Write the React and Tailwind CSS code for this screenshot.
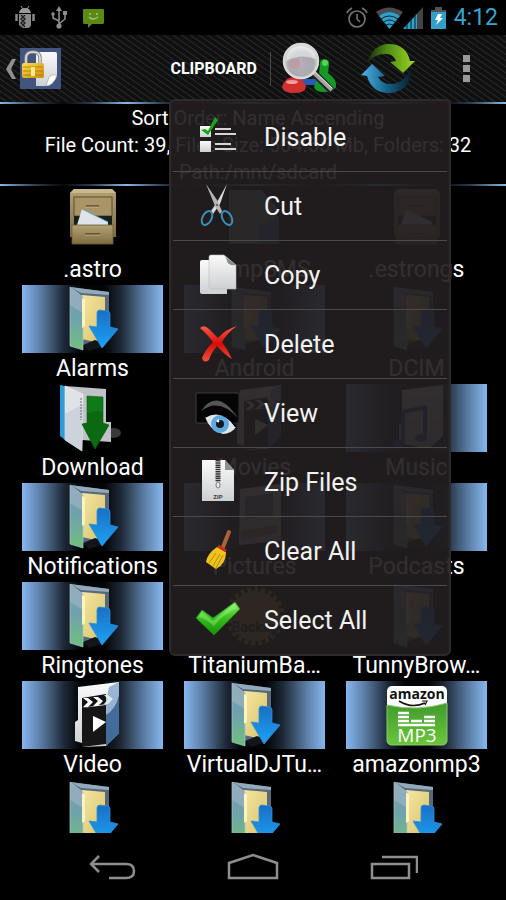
const EDGE_LINE =
  'h-[2px] shrink-0 bg-[repeating-linear-gradient(90deg,#8ab8e6_0%,#2b3d50_7%,#05080c_12.5%,#2b3d50_18%,#8ab8e6_25%)]';

// Gradients shared by all of the icons
function Gradients() {
  return (
    <svg className="absolute size-0" aria-hidden="true">
      <defs>
        <linearGradient id="cover" x1="0" y1="0" x2="0" y2="1">
          <stop offset="0" stopColor="#7d9bb0" />
          <stop offset="0.5" stopColor="#6fa3ab" />
          <stop offset="1" stopColor="#6fc07c" />
        </linearGradient>
        <linearGradient id="paper" x1="0" y1="0" x2="1" y2="1">
          <stop offset="0" stopColor="#f5e6a0" />
          <stop offset="1" stopColor="#d6c26c" />
        </linearGradient>
        <linearGradient id="arrow" x1="0" y1="0" x2="0" y2="1">
          <stop offset="0" stopColor="#1a6fc4" />
          <stop offset="1" stopColor="#1ca2f4" />
        </linearGradient>
        <linearGradient id="white" x1="0" y1="0" x2="0" y2="1">
          <stop offset="0" stopColor="#fafafa" />
          <stop offset="1" stopColor="#cdd0d3" />
        </linearGradient>
        <linearGradient id="wood" x1="0" y1="0" x2="0" y2="1">
          <stop offset="0" stopColor="#b3a175" />
          <stop offset="1" stopColor="#806c41" />
        </linearGradient>
        <linearGradient id="leaf" x1="0" y1="0" x2="1" y2="0">
          <stop offset="0" stopColor="#12260a" />
          <stop offset="0.4" stopColor="#4d8a14" />
          <stop offset="1" stopColor="#9ad423" />
        </linearGradient>
        <linearGradient id="sea" x1="0" y1="0" x2="1" y2="0">
          <stop offset="0" stopColor="#4fb4e8" />
          <stop offset="0.5" stopColor="#16648c" />
          <stop offset="1" stopColor="#0a1c28" />
        </linearGradient>
        <linearGradient id="tick" x1="0" y1="0" x2="0" y2="1">
          <stop offset="0" stopColor="#8df06c" />
          <stop offset="0.5" stopColor="#35bd1c" />
          <stop offset="1" stopColor="#178f08" />
        </linearGradient>
        <linearGradient id="red" x1="0" y1="0" x2="0" y2="1">
          <stop offset="0" stopColor="#ff5a4a" />
          <stop offset="0.5" stopColor="#d80d05" />
          <stop offset="1" stopColor="#f0523f" />
        </linearGradient>
        <linearGradient id="gold" x1="0" y1="0" x2="1" y2="1">
          <stop offset="0" stopColor="#ffe04a" />
          <stop offset="1" stopColor="#c98a08" />
        </linearGradient>
        <linearGradient id="mp3" x1="0" y1="0" x2="0" y2="1">
          <stop offset="0" stopColor="#3f9a2c" />
          <stop offset="1" stopColor="#6cc63c" />
        </linearGradient>
        <radialGradient id="lens" cx="0.5" cy="0.6" r="0.6">
          <stop offset="0" stopColor="#b9aeb9" />
          <stop offset="0.6" stopColor="#a9abaf" />
          <stop offset="1" stopColor="#e4e6e8" />
        </radialGradient>
      </defs>
    </svg>
  );
}

function FileSvg({ children }) {
  return (
    <svg viewBox="-6 0 68 68" className="size-[68px]" aria-hidden="true">
      {children}
    </svg>
  );
}

function FolderIcon() {
  return (
    <FileSvg>
      <path d="M5 2 44 7V40L30 58 18 60Z" fill="#56697a" />
      <path d="M5 2 44 7V10L16 8Z" fill="#93aabd" />
      <path d="M17 10 40 12V50L30 57 17 54Z" fill="url(#paper)" />
      <path d="M18 60 30 55 42 60 24 66Z" fill="#12161a" />
      <path d="M5 2 18 12V65L5 61Z" fill="url(#cover)" stroke="#a9c4cc" strokeWidth="0.7" />
      <path d="M5 2 18 12V28L5 20Z" fill="#a8bccb" opacity="0.5" />
      <path d="M17 13 20 15V41L17 43Z" fill="#fff3bd" />
      <path d="M32 28Q32 25 35 25L42 26Q45 26 45 29V42L53 44 37 63 24 41 32 42Z" fill="url(#arrow)" stroke="#2a91e0" strokeWidth="0.8" />
    </FileSvg>
  );
}

function DownloadIcon() {
  return (
    <FileSvg>
      <ellipse cx="48" cy="49" rx="8" ry="5" fill="#3a3a3a" />
      <path d="M0 2 41 5V38H46V58L17 56Z" fill="#bfc3c7" />
      <path d="M-5 1 0 2V56L-5 52Z" fill="#2d9bd6" />
      <path d="M0 2 18 10 17 67 0 56Z" fill="#dfe3e8" stroke="#f4f4f4" strokeWidth="0.6" />
      <path d="M0 30 18 20 17 67 0 56Z" fill="#cdd3da" />
      <path d="M16 14V36" stroke="#6c7076" strokeWidth="1" strokeDasharray="2 1" />
      <path d="M22 12 38 13V39L44 41 30 65 17 40 22 39Z" fill="#0f7a17" stroke="#0a5c10" strokeWidth="0.6" />
      <path d="M22 30Q30 25 38 28V39L44 41 30 65 17 40 22 39Z" fill="#075e0d" opacity="0.6" />
    </FileSvg>
  );
}

function CabinetIcon() {
  return (
    <FileSvg>
      <path d="M9 3H47L51 7V51H5V7Z" fill="url(#wood)" />
      <path d="M9 3H47L51 7H5Z" fill="#c9b98e" />
      <rect x="9" y="11" width="38" height="19" fill="#a89467" stroke="#5c4c2b" strokeWidth="1" />
      <rect x="9" y="30" width="38" height="9" fill="#15201c" />
      <path d="M17 23 43 36V39H12Z" fill="#dfe4ea" />
      <path d="M17 23 43 36" stroke="#5ea4bf" strokeWidth="1" />
      <rect x="7" y="39" width="41" height="19" fill="url(#wood)" stroke="#6e5c36" strokeWidth="0.8" />
      <path d="M21 20H34M20 48H35" stroke="#54452a" strokeWidth="1.5" />
      <path d="M21 21H34M20 49H35" stroke="#d4c59b" strokeWidth="0.6" />
    </FileSvg>
  );
}

function VideoIcon() {
  return (
    <FileSvg>
      <path d="M13 6 54 1V52L41 65 17 66V62L10 60V41L13 39Z" fill="url(#white)" />
      <path d="M44 6 54 1V52L41 65V20Z" fill="#5f8cc0" opacity="0.6" />
      <path d="M17 27 41 24V63L17 66Z" fill="#161616" />
      <path d="M17 17 41 13V23L17 27Z" fill="#111" />
      <path d="M18 17H23L28 21 23 26H18L23 21ZM28 16H33L38 20 33 25H28L33 20Z" fill="#fff" />
      <path d="M39 14H43L48 18 43 23H39L43 18Z" fill="#dfe6ee" />
      <path d="M41 34Q51 28 54 14V52L41 65Z" fill="#2b5587" opacity="0.75" />
      <path d="M28 35 41 41 28 51Z" fill="#fff" />
    </FileSvg>
  );
}

function MusicIcon() {
  return (
    <FileSvg>
      <path d="M13 6 54 1V52L41 64 10 60V41L13 39Z" fill="url(#white)" />
      <path d="M14 28 36 23V52M14 28V58" fill="none" stroke="#2a55b0" strokeWidth="4" />
      <ellipse cx="10" cy="59" rx="6" ry="4" fill="#2a55b0" />
      <ellipse cx="32" cy="54" rx="6" ry="4" fill="#2a55b0" />
    </FileSvg>
  );
}

function PageIcon() {
  return (
    <FileSvg>
      <path d="M2 4H34L50 22V58H2Z" fill="#8d959c" />
      <path d="M32 40 52 30V58H32Z" fill="#3a7ba8" />
    </FileSvg>
  );
}

function PicturesIcon() {
  return (
    <FileSvg>
      <path d="M13 6 54 1V58L12 62Z" fill="url(#white)" />
      <path d="M18 14 46 10V32L18 36Z" fill="#6d87a0" />
      <path d="M14 48 50 42V50L14 57Z" fill="#a88a5a" />
    </FileSvg>
  );
}

function BackupIcon() {
  return (
    <FileSvg>
      <circle cx="28" cy="34" r="27" fill="none" stroke="#b08a2e" strokeWidth="5" strokeDasharray="4 3" />
      <circle cx="28" cy="34" r="25" fill="#b08a2e" />
      <text x="28" y="50" textAnchor="middle" fontFamily="Roboto" fontSize="14" fontWeight="700" fill="#111">
        Backup
      </text>
    </FileSvg>
  );
}

function AmazonIcon() {
  return (
    <FileSvg>
      <rect x="-2" y="5" width="60" height="59" rx="5" fill="#fff" />
      <path d="M-2 24Q28 31 58 22V59Q58 64 53 64H3Q-2 64 -2 59Z" fill="url(#mp3)" stroke="#8bc872" strokeWidth="1" />
      <text x="28" y="18" textAnchor="middle" fontFamily="Open Sans, sans-serif" fontSize="14" fontWeight="700" fill="#111">
        amazon
      </text>
      <path d="M10 20Q23 28 36 22" fill="none" stroke="#111" strokeWidth="1.5" />
      <path d="M33 20 38 20 36 24" fill="none" stroke="#111" strokeWidth="1.2" />
      <path d="M9 32H20M9 36H20M9 40H20M9 44H46M22 40H33M35 36H46M35 40H46" stroke="#fff" strokeWidth="2.4" />
      <text x="28" y="61" textAnchor="middle" fontFamily="Open Sans, sans-serif" fontSize="19" fill="#fff">
        MP3
      </text>
    </FileSvg>
  );
}

function MenuSvg({ children }) {
  return (
    <svg viewBox="0 0 48 48" className="size-12 shrink-0" aria-hidden="true">
      {children}
    </svg>
  );
}

const MENU = [
  {
    label: 'Disable',
    icon: (
      <MenuSvg>
        <rect x="7" y="13" width="11" height="11" fill="url(#white)" />
        <rect x="7" y="28" width="11" height="11" fill="url(#white)" />
        <path d="M22 16H38M22 21H43M22 31H38M22 36H43" stroke="#d6d6d6" strokeWidth="2" />
        <path d="M8 17 12 16 15 18 22 4 25 7 15 22Z" fill="#16a80c" />
      </MenuSvg>
    ),
  },
  {
    label: 'Cut',
    icon: (
      <MenuSvg>
        <path d="M34 2 27 22 20 32 18 29 24 20Z" fill="#d9d9d9" />
        <path d="M13 2 24 18 29 29 27 32 22 24Z" fill="#b4b4b4" />
        <ellipse cx="14" cy="36" rx="4.5" ry="7.5" transform="rotate(28 14 36)" fill="none" stroke="#3b8fb8" strokeWidth="2" />
        <ellipse cx="34" cy="36" rx="4.5" ry="7.5" transform="rotate(-28 34 36)" fill="none" stroke="#3b8fb8" strokeWidth="2" />
        <circle cx="24" cy="23" r="1" fill="#555" />
      </MenuSvg>
    ),
  },
  {
    label: 'Copy',
    icon: (
      <MenuSvg>
        <path d="M7 11Q7 9 9 9H34V43H9Q7 43 7 41Z" fill="url(#white)" />
        <path d="M16 6Q16 4 18 4H31L43 14V38H18Q16 38 16 36Z" fill="url(#white)" stroke="#b9b9b9" strokeWidth="0.6" />
        <path d="M30 4 43 14Q35 15 34 10Q33 5 30 4Z" fill="#8b8b8b" />
      </MenuSvg>
    ),
  },
  {
    label: 'Delete',
    icon: (
      <MenuSvg>
        <path d="M7 8Q11 4 16 9L25 18Q33 9 44 6Q34 13 29 22Q35 30 39 39Q33 36 24 26Q18 33 16 40Q11 44 9 38Q12 30 20 22Q13 13 7 8Z" fill="url(#red)" />
      </MenuSvg>
    ),
  },
  {
    label: 'View',
    icon: (
      <MenuSvg>
        <path d="M3 4H46V34H3Z" fill="#050505" stroke="#3a3a3a" strokeWidth="1" />
        <path d="M8 22Q24 -2 45 29Q26 8 8 22Z" fill="#555" />
        <path d="M11 26Q26 14 45 36Q28 21 11 26Z" fill="#000" />
        <path d="M12 28Q29 18 43 38Q38 45 30 45Q17 42 12 28Z" fill="#dfe6ea" />
        <circle cx="27" cy="35" r="9" fill="#5fa9e2" />
        <circle cx="27" cy="35" r="4" fill="#14191e" />
        <circle cx="25" cy="32" r="1.4" fill="#fff" />
        <path d="M12 28Q29 18 43 38" fill="none" stroke="#000" strokeWidth="1.5" />
      </MenuSvg>
    ),
  },
  {
    label: 'Zip Files',
    icon: (
      <MenuSvg>
        <path d="M9 2H32L41 12V43H9Z" fill="url(#white)" />
        <path d="M32 2 41 12H32Z" fill="#909090" />
        <path d="M25 2V24" stroke="#333" strokeWidth="5" strokeDasharray="1.5 0.7" />
        <ellipse cx="25" cy="27" rx="2" ry="3" fill="#eee" stroke="#777" strokeWidth="1" />
        <text x="25" y="41" textAnchor="middle" fontFamily="Roboto" fontSize="6" fontWeight="700" fill="#444">
          ZIP
        </text>
      </MenuSvg>
    ),
  },
  {
    label: 'Clear All',
    icon: (
      <MenuSvg>
        <path d="M36 5 30 20" stroke="#a9643a" strokeWidth="4" strokeLinecap="round" />
        <path d="M24 20 33 25Q33 37 23 42L13 35Q14 27 24 20Z" fill="#efc51b" />
        <path d="M23 26 16 36M27 27 20 39M30 28 23 41" stroke="#b8860b" strokeWidth="1" />
        <path d="M25 19 33 24" stroke="#c62b1c" strokeWidth="3" />
      </MenuSvg>
    ),
  },
  {
    label: 'Select All',
    icon: (
      <MenuSvg>
        <path d="M3 22 9 14 20 22 42 6 47 13 21 39Z" fill="url(#tick)" stroke="#1c8c10" strokeWidth="0.8" strokeLinejoin="round" />
        <path d="M5 21 9 16 20 25 41 8 44 12Q28 20 21 30Q12 22 5 21Z" fill="#b6ff9c" opacity="0.35" />
      </MenuSvg>
    ),
  },
];

const FILES = [
  { name: '.astro', icon: <CabinetIcon /> },
  { name: '.dumpSMS', icon: <PageIcon /> },
  { name: '.estrongs', icon: <CabinetIcon /> },
  { name: 'Alarms', icon: <FolderIcon />, selected: true },
  { name: 'Android', icon: <FolderIcon />, selected: true },
  { name: 'DCIM', icon: <FolderIcon /> },
  { name: 'Download', icon: <DownloadIcon /> },
  { name: 'Movies', icon: <VideoIcon /> },
  { name: 'Music', icon: <MusicIcon />, selected: true },
  { name: 'Notifications', icon: <FolderIcon />, selected: true },
  { name: 'Pictures', icon: <PicturesIcon />, selected: true },
  { name: 'Podcasts', icon: <FolderIcon />, selected: true },
  { name: 'Ringtones', icon: <FolderIcon />, selected: true },
  { name: 'TitaniumBa…', icon: <BackupIcon /> },
  { name: 'TunnyBrow…', icon: <FolderIcon /> },
  { name: 'Video', icon: <VideoIcon />, selected: true },
  { name: 'VirtualDJTu…', icon: <FolderIcon />, selected: true },
  { name: 'amazonmp3', icon: <AmazonIcon />, selected: true },
  { name: '', icon: <FolderIcon /> },
  { name: '', icon: <FolderIcon /> },
  { name: '', icon: <FolderIcon /> },
];

function StatusBar() {
  return (
    <div className="flex h-[35px] shrink-0 items-center pl-[15px] pr-2">
      <div className="flex items-center gap-[15px]">
        <svg viewBox="0 0 20 24" className="h-6 w-5" aria-hidden="true">
          <path d="M4 7Q5 2 10 2Q15 2 16 7Z" fill="#9a9a9a" />
          <path d="M6 0 8 3M14 0 12 3" stroke="#9a9a9a" />
          <path d="M4 8H16V18Q16 22 12 22H8L4 19Z" fill="#8a8a8a" />
          <path d="M6 9 10 13 6 17 10 21M10 9 6 13 10 17 7 20" stroke="#222" fill="none" strokeWidth="1.4" />
          <path d="M1.5 8V15M18.5 8V15" stroke="#8a8a8a" strokeWidth="2.5" />
        </svg>
        <svg viewBox="0 0 18 24" className="h-6 w-[18px]" fill="none" stroke="#8c8c8c" strokeWidth="1.6" aria-hidden="true">
          <path d="M9 20V3M9 18 15 13V8M9 15 3 12V9" />
          <path d="M9 0 12 5H6Z" fill="#8c8c8c" stroke="none" />
          <circle cx="9" cy="20" r="2.6" fill="#8c8c8c" stroke="none" />
          <circle cx="3" cy="8" r="1.8" fill="#8c8c8c" stroke="none" />
          <path d="M13 5H17V9H13Z" fill="#8c8c8c" stroke="none" />
        </svg>
        <svg viewBox="0 0 22 24" className="h-6 w-[22px]" aria-hidden="true">
          <path d="M1 3H20Q21 3 21 4V16Q21 18 20 18H9L5 22V18H1Q0 18 0 16V4Q0 3 1 3Z" fill="#5a8a14" />
          <path d="M6 11Q10 15 15 11" fill="none" stroke="#a9c47c" strokeWidth="1.2" />
          <path d="M6 8H8M13 8H15" stroke="#a9c47c" strokeWidth="1.5" />
        </svg>
      </div>
      <div className="ml-auto flex items-center gap-2">
        <svg viewBox="0 0 22 22" className="size-[22px]" fill="none" stroke="#777" strokeWidth="1.6" aria-hidden="true">
          <circle cx="11" cy="12" r="8" />
          <path d="M11 7V12L14 15M1 6Q2 3 6 1M21 6Q20 3 16 1" />
        </svg>
        <div className="flex items-center">
          <svg viewBox="0 0 27 22" className="h-[22px] w-[27px]" fill="none" aria-hidden="true">
            <path d="M0 5Q13 -4 27 5L24 9Q13 1 3 9Z" fill="#4a4a4a" />
            <path d="M3 9Q13 1 24 9L13.500 22Z" fill="#31a0c8" />
            <path d="M5 12Q13 6 22 12M8 15Q13 11 19 15M10 18Q13 16 17 18" stroke="#06222e" strokeWidth="1" />
          </svg>
          <svg viewBox="0 0 20 22" className="h-[22px] w-5" aria-hidden="true">
            <path d="M0 22 20 0V22Z" fill="#444" />
            <path d="M0 22 14 7V22Z" fill="#31a0c8" />
            <path d="M4 14V22M8 10V22M12 6V22" stroke="#05202c" strokeWidth="1" />
          </svg>
        </div>
        <svg viewBox="0 0 15 22" className="h-[22px] w-[15px]" aria-hidden="true">
          <path d="M4 0H11V3H15V6H0V3H4Z" fill="#4f5356" />
          <path d="M0 5H15V22H0Z" fill="#31a0c8" />
          <path d="M7 7H11L9 11H12L5 18 7 13H4Z" fill="#fff" />
        </svg>
        <time className="text-[23px] leading-6 text-[#33a5cf]">4:12</time>
      </div>
    </div>
  );
}

function ActionBar() {
  return (
    <header className="flex h-[67px] shrink-0 items-center bg-[repeating-linear-gradient(35deg,#101010_0px,#101010_3px,#2a2a2a_4px,#101010_5px)]">
      <button className="ml-[6px] flex items-center gap-1" aria-label="Back">
        <svg viewBox="0 0 10 22" className="h-[22px] w-[10px]" aria-hidden="true">
          <path d="M6 1H10L5 11 10 21H6L0 11Z" fill="#8f8f8f" />
        </svg>
        <svg viewBox="0 0 41 41" className="size-[41px]" aria-hidden="true">
          <rect width="41" height="41" fill="#41557f" />
          <path d="M16 4H35Q37 4 37 6V28Q33 38 26 38H16Z" fill="url(#white)" />
          <path d="M37 27Q31 26 29 29Q28 32 26 38Q34 37 37 27Z" fill="#fff" stroke="#999" strokeWidth="0.6" />
          <path d="M6 17V10Q6 4 13 4Q20 4 20 10V17" fill="none" stroke="#85888a" strokeWidth="3.5" />
          <path d="M6 17V10Q6 4 13 4Q20 4 20 10V17" fill="none" stroke="#e4e4e4" strokeWidth="1.5" />
          <rect x="2" y="15" width="22" height="15" rx="2" fill="url(#gold)" />
          <path d="M3 19H23M3 23H23M3 27H23" stroke="#a87410" strokeWidth="0.8" />
          <path d="M11 19H15V28H11Z" fill="#ffe98a" />
        </svg>
      </button>
      <button className="ml-auto text-base font-bold leading-6 text-white">CLIPBOARD</button>
      <div className="ml-[13px] h-[34px] w-px bg-[#4a4a4a]" />
      <button className="ml-2" aria-label="Search">
        <svg viewBox="0 0 60 56" className="h-14 w-[60px]" aria-hidden="true">
          <path d="M20 38H38V44H24Z" fill="#2a5bb8" />
          <path d="M3 46Q6 36 15 36Q24 36 27 46Q26 52 15 52Q4 52 3 46Z" fill="#d03030" />
          <ellipse cx="13" cy="41" rx="6" ry="2" fill="#f49a9a" />
          <path d="M41 22Q41 18 46 18Q51 19 50 24L49 32Q58 38 57 46Q54 51 45 51Q36 51 35 46L40 34Z" fill="#149a24" />
          <circle cx="46" cy="22" r="3" fill="#58d25c" />
          <path d="M34 31 53 50" stroke="#222" strokeWidth="7" />
          <path d="M33 30 53 49" stroke="#a4a4a4" strokeWidth="4" />
          <path d="M34 29 53 47" stroke="#e6e6e6" strokeWidth="1" />
          <circle cx="22" cy="20" r="17" fill="url(#lens)" stroke="#d8d8d8" strokeWidth="2.5" />
          <path d="M7 20Q8 6 22 5Q35 6 37 18Q22 12 7 20Z" fill="#fff" opacity="0.5" />
          <circle cx="16" cy="23" r="5" fill="#d08a92" opacity="0.5" />
        </svg>
      </button>
      <button className="ml-[22px]" aria-label="Refresh">
        <svg viewBox="0 0 56 56" className="size-14" aria-hidden="true">
          <path d="M6 22Q12 3 28 3Q45 3 49 20L54 20 42 32 29 21 35 20Q32 12 24 13Q14 13 6 22Z" fill="url(#leaf)" />
          <path d="M0 34 11 23 24 35 17 36Q22 44 31 43Q44 42 50 26Q53 48 30 52Q11 53 6 35Z" fill="url(#sea)" />
        </svg>
      </button>
      <button className="ml-[46px] mr-9 flex flex-col gap-[3px]" aria-label="More options">
        <span className="size-[7px] bg-[#999]" />
        <span className="size-[7px] bg-[#999]" />
        <span className="size-[7px] bg-[#999]" />
      </button>
    </header>
  );
}

function FileTile({ file }) {
  return (
    <button className="flex min-w-0 flex-col items-stretch">
      <span
        className={
          file.selected
            ? 'flex justify-center bg-[linear-gradient(90deg,#86b6ee_0%,#5f83ac_12%,#1d2836_30%,#020406_42%,#020406_58%,#1d2836_70%,#5f83ac_88%,#86b6ee_100%)]'
            : 'flex justify-center'
        }
      >
        {file.icon}
      </span>
      <span className="h-[31px] whitespace-nowrap text-center text-[23px] leading-8">{file.name}</span>
    </button>
  );
}

function PopupMenu() {
  return (
    <ul className="absolute right-[55px] top-[99px] w-[282px] rounded-md border-2 border-[#2e2b2c]/95 bg-[#221e20]/93 px-[2px] pt-[2px]">
      {MENU.map((item) => (
        <li key={item.label} className="border-b border-[#4b494a] last:border-b-0">
          <button className="flex h-[68px] w-full items-center gap-[23px] pl-5 text-left text-[25px] leading-8 text-[#f2f2f2]">
            {item.icon}
            <span className="pt-[2px]">{item.label}</span>
          </button>
        </li>
      ))}
    </ul>
  );
}

function NavBar() {
  return (
    <nav className="grid h-[67px] shrink-0 grid-cols-3 items-center justify-items-center bg-black px-[41px]">
      <button aria-label="Back">
        <svg viewBox="0 0 48 30" className="h-[30px] w-12" fill="none" stroke="#8e8e8e" strokeWidth="2.5" aria-hidden="true">
          <path d="M11 4 3 12 11 20M3 12H38Q46 12 46 19Q46 26 38 26H21" />
        </svg>
      </button>
      <button aria-label="Home">
        <svg viewBox="0 0 52 30" className="h-[30px] w-[52px]" fill="none" stroke="#8e8e8e" strokeWidth="2.5" aria-hidden="true">
          <path d="M2 26V11L26 3 50 11V26Z" />
        </svg>
      </button>
      <button aria-label="Recent apps">
        <svg viewBox="0 0 48 30" className="h-[30px] w-12" fill="none" stroke="#8e8e8e" strokeWidth="2.5" aria-hidden="true">
          <path d="M2 12H39V26H2ZM12 5H47V21" />
        </svg>
      </button>
    </nav>
  );
}

export default function App() {
  return (
    <div className="relative flex h-screen flex-col overflow-hidden bg-black font-[Roboto,sans-serif] text-white">
      <Gradients />
      <StatusBar />
      <ActionBar />
      <div className={EDGE_LINE} />
      <div className="h-20 shrink-0 pl-[10px] pt-px text-center text-[20px] leading-[27px]">
        <p>Sort Order: Name Ascending</p>
        <p>File Count: 39, Files Size: 504.55 Mb, Folders: 32</p>
        <p>Path:/mnt/sdcard</p>
      </div>
      <div className={EDGE_LINE} />
      <main className="grid min-h-0 flex-1 auto-rows-max grid-cols-3 gap-x-[21px] overflow-hidden pl-[22px] pr-[19px]">
        {FILES.map((file, i) => (
          <FileTile key={i} file={file} />
        ))}
      </main>
      <NavBar />
      <PopupMenu />
    </div>
  );
}
